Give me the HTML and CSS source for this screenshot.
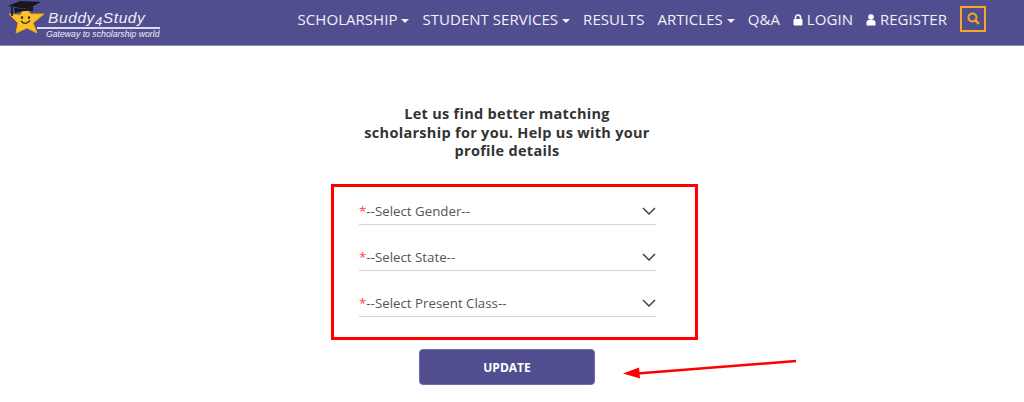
FILE: index.html
```html
<!DOCTYPE html>
<html lang="en">
<head>
    <meta charset="UTF-8">
    <meta name="viewport" content="width=device-width, initial-scale=1.0">
    <title>Buddy4Study</title>
    <link rel="stylesheet" href="styles.css">
</head>
<body>
    <header class="site-header">
        <a class="logo" href="#">
            <svg class="logo-mark" viewBox="0 0 46 36" width="46" height="36">
                <!-- star -->
                <path d="M25 8 L31 14 L44 14 L33 23 L37 33 L27 28 L16 33 L18 23 L9 14 L20 15 Z" fill="#fbc02d" stroke="#f5a800" stroke-width="1" stroke-linejoin="round"/>
                <!-- face -->
                <ellipse cx="22" cy="17.5" rx="1.1" ry="1.6" fill="#3a2a10"/>
                <ellipse cx="29" cy="17.5" rx="1.1" ry="1.6" fill="#3a2a10"/>
                <path d="M21 21 Q25.5 26 30 20.5" fill="none" stroke="#3a2a10" stroke-width="1.2"/>
                <!-- graduation cap -->
                <path d="M8 6 L20 1 L41 2 L27 9 Z" fill="#17171f"/>
                <path d="M14 8 L27 9 L33 6 L33 11 Q24 10 15 13 Z" fill="#17171f"/>
                <path d="M12 7 L12 16" stroke="#17171f" stroke-width="1.6"/>
            </svg>
            <div class="logo-text">
                <span class="logo-name">Buddy<span class="logo-four">4</span>Study</span>
                <span class="logo-tag">Gateway to scholarship world</span>
            </div>
        </a>
        <nav class="main-nav">
            <a href="#">SCHOLARSHIP <i class="caret"></i></a>
            <a href="#">STUDENT SERVICES <i class="caret"></i></a>
            <a href="#">RESULTS</a>
            <a href="#">ARTICLES <i class="caret"></i></a>
            <a href="#">Q&amp;A</a>
            <a href="#">
                <svg class="nav-icon" viewBox="0 0 10 12" width="10" height="12"><path d="M2.5 5.5 V3.6 a2.5 2.5 0 0 1 5 0 V5.5" fill="none" stroke="#fff" stroke-width="1.5"/><rect x="0.5" y="5" width="9" height="6.5" rx="1" fill="#fff"/></svg>
                LOGIN
            </a>
            <a href="#">
                <svg class="nav-icon" viewBox="0 0 10 12" width="10" height="12"><circle cx="5" cy="3" r="2.8" fill="#fff"/><path d="M0.5 11.5 V8.5 Q0.5 6 3 6 H7 Q9.5 6 9.5 8.5 V11.5 Z" fill="#fff"/></svg>
                REGISTER
            </a>
            <button class="search-btn" type="button" aria-label="Search">
                <svg viewBox="0 0 12 12" width="13" height="13"><circle cx="5" cy="5" r="3.7" fill="none" stroke="#f5a623" stroke-width="1.8"/><path d="M7.8 7.8 L11 11" stroke="#f5a623" stroke-width="2.2"/></svg>
            </button>
        </nav>
    </header>

    <main class="profile">
        <h2>Let us find better matching scholarship for you. Help us with your profile details</h2>
        <form class="profile-form">
            <div class="field-box">
                <div class="field"><span><em>*</em>--Select Gender--</span><svg class="chevron" viewBox="0 0 14 8" width="14" height="8"><path d="M1 1 L7 7 L13 1" fill="none" stroke="#444" stroke-width="1.5"/></svg></div>
                <div class="field"><span><em>*</em>--Select State--</span><svg class="chevron" viewBox="0 0 14 8" width="14" height="8"><path d="M1 1 L7 7 L13 1" fill="none" stroke="#444" stroke-width="1.5"/></svg></div>
                <div class="field"><span><em>*</em>--Select Present Class--</span><svg class="chevron" viewBox="0 0 14 8" width="14" height="8"><path d="M1 1 L7 7 L13 1" fill="none" stroke="#444" stroke-width="1.5"/></svg></div>
            </div>
            <button class="update-btn" type="button">UPDATE</button>
        </form>
    </main>

    <!-- annotation arrow drawn over the page -->
    <svg class="arrow" viewBox="0 0 180 24" width="180" height="24">
        <path d="M173 2 L14 14.5" stroke="#f00" stroke-width="2.5" fill="none"/>
        <path d="M0 14.5 L16 8.5 L17 19.5 Z" fill="#f00"/>
    </svg>
</body>
</html>
```

FILE: styles.css
```css
* {
    box-sizing: border-box;
}
html, body {
    height: 100%;
}
body {
    margin: 0;
    font-family: "Open Sans", Arial, sans-serif;
    background-color: #fff;
    color: #333;
    overflow: hidden;
}
.site-header {
    height: 46px;
    display: flex;
    align-items: flex-start;
    justify-content: space-between;
    background-color: #514e8f;
    border-bottom: 1px solid #8f8cbb;
    padding-right: 38px;
}
.logo {
    display: flex;
    text-decoration: none;
    color: #eeeef6;
}
.logo-text {
    display: flex;
    flex-direction: column;
    margin-left: -9px;
    font-family: "Liberation Sans", Arial, sans-serif;
    font-style: italic;
}
.logo-name {
    width: 123px;
    margin-top: 10px;
    padding-left: 11px;
    font-size: 15.5px;
    line-height: 16px;
    letter-spacing: 0.6px;
    border-bottom: 2px solid #dcdcec;
}
.logo-four {
    font-size: 13px;
    position: relative;
    top: 3px;
}
.logo-tag {
    margin-left: 9px;
    font-size: 8.7px;
    line-height: 11px;
    white-space: nowrap;
}
.main-nav {
    display: flex;
    align-items: center;
    gap: 13px;
    height: 37px;
}
.main-nav a {
    color: #f1f1f7;
    font-size: 15px;
    letter-spacing: 0.04px;
    text-decoration: none;
    white-space: nowrap;
}
.caret {
    display: inline-block;
    width: 0;
    height: 0;
    vertical-align: 2px;
    border-top: 4px solid #f1f1f7;
    border-left: 4px solid transparent;
    border-right: 4px solid transparent;
}
.nav-icon {
    vertical-align: -1px;
}
.search-btn {
    width: 26px;
    height: 26px;
    padding: 0;
    display: flex;
    align-items: center;
    justify-content: center;
    background: none;
    border: 2px solid #f5a623;
}
.profile {
    display: flex;
    flex-direction: column;
    align-items: center;
    padding-top: 59px;
    padding-right: 10px;
}
.profile h2 {
    width: 290px;
    margin: 0;
    font-size: 14.5px;
    line-height: 18.5px;
    font-weight: 700;
    text-align: center;
    letter-spacing: 0.3px;
    color: #333;
}
.profile-form {
    display: flex;
    flex-direction: column;
    align-items: center;
    margin-top: 23.5px;
}
.field-box {
    width: 367px;
    height: 156px;
    margin-left: 15px;
    padding: 11px 39px 0 25px;
    display: flex;
    flex-direction: column;
    gap: 19px;
    border: 3px solid #f00;
}
.field {
    height: 27px;
    display: flex;
    justify-content: space-between;
    align-items: center;
    font-size: 13.3px;
    color: #555;
    border-bottom: 1px solid #d5d5d5;
}
.field em {
    color: #f44;
    font-style: normal;
}
.chevron {
    flex: none;
}
.update-btn {
    width: 176px;
    height: 36px;
    margin-top: 9px;
    color: #fff;
    font-family: inherit;
    font-size: 12px;
    font-weight: 700;
    background-color: #514e8f;
    border: 1px solid #6d6aa5;
    border-radius: 4px;
}
.arrow {
    position: absolute;
    left: 623px;
    top: 359px;
}
```
